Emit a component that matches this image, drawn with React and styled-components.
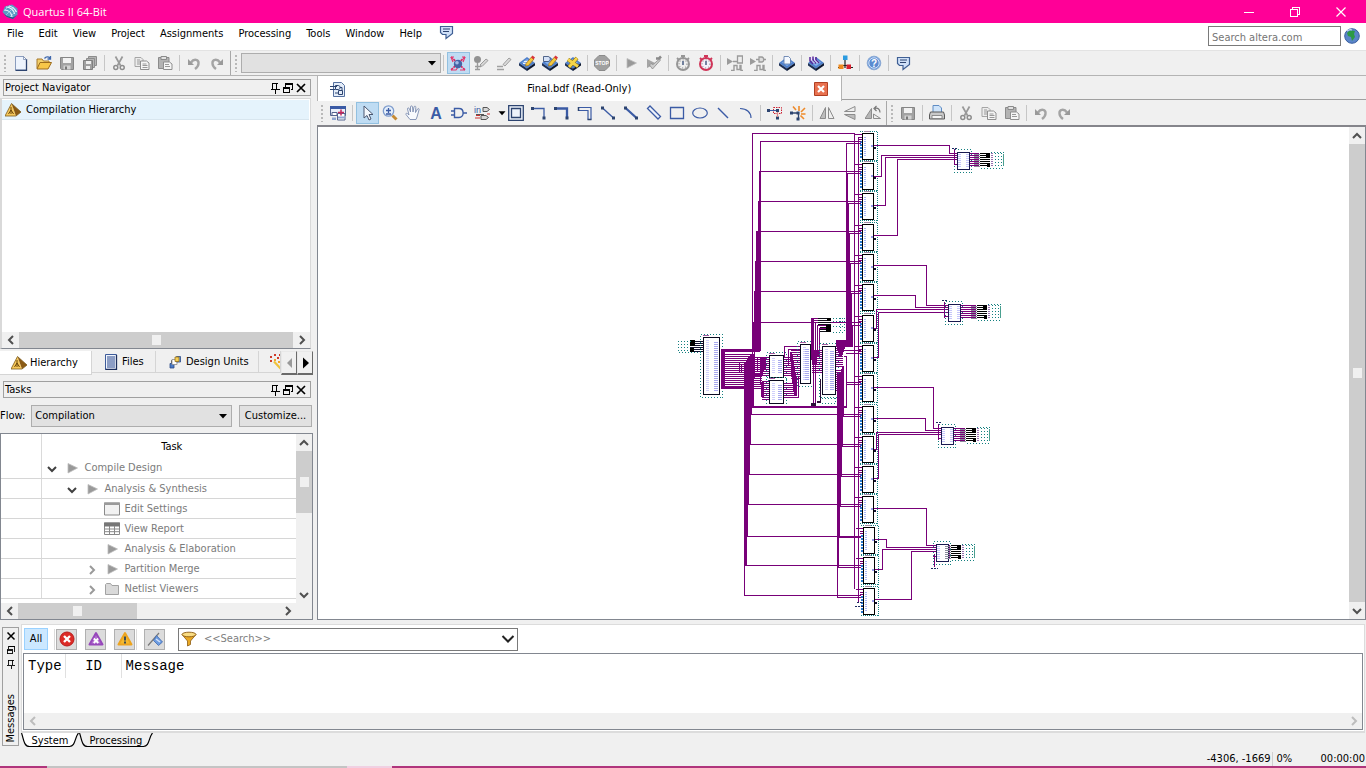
import React from "react";
import styled, { createGlobalStyle, css } from "styled-components";

const ui = '"DejaVu Sans Condensed", "Noto Sans", sans-serif';

const GlobalStyle = createGlobalStyle`
  * { box-sizing: border-box; }
  body { margin: 0; background: #f0f0f0; color: #000; font: 11px/14px ${ui}; }
  button, input, select { font: inherit; color: inherit; margin: 0; border-radius: 0; }
  h2 { font: inherit; margin: 0; }
`;

/* ---------- icons ---------- */

const blue = "#3b5ba5";
const navy = "#2d4470";
const gray = "#9b9b9b";

const chip = (
  <>
    <path d="M8 2 16 8 8 13.500 0 8z" fill="#4f80cc" />
    <path d="M0 8 8 13.500V16L0 10.500z" fill="#1c2f55" />
    <path d="M16 8 8 13.500V16l8-5.500z" fill="#0d1830" />
    <path d="M3 7.500 8 4l5 3.500-5 3.500z" fill="#86b0ea" />
  </>
);

const pencil = (
  <>
    <path d="M7 8.500 12.500 2l2.500 2-5.500 6.500L6.500 11z" fill="#f5c93d" stroke="#9a6a12" strokeWidth=".7" />
    <path d="m12 2.500 1.500-2L16 2.500 14.500 4.500z" fill="#d8333a" />
  </>
);

const bubble = (
  <>
    <path d="M2.500 2.500h12v7L8 14.500v-4H4.500l-2-2z" fill="#cfe0f8" stroke="#3f5f94" strokeWidth="1.200" />
    <path d="M5 5h7M5 7.500h6" stroke={navy} fill="none" />
  </>
);

const grayPlay = (
  <path d="m4 3.500 9.500 4.500L4 13z" fill="#999" stroke="#bdbdbd" strokeWidth=".8" />
);

const floppy = (
  <>
    <path d="M1.500 2.500h13v12h-12l-1-1z" fill="#a2a2a2" stroke="#858585" />
    <path d="M4 3h8v5H4z" fill="#f2f2f2" />
    <path d="M4.500 10.500h7v4h-7z" fill="#d2d2d2" />
    <path d="M6 11.500h2v3H6z" fill="#777" />
  </>
);

const stopwatch = (c, f) => (
  <>
    <path d="M6 1h4M8 1v2.500M2 3 4 5M14 3 12 5" stroke={c} strokeWidth="1.800" fill="none" />
    <circle cx="8" cy="9" r="6" fill={f} stroke={c} strokeWidth="2" />
    <path d="M8 6v4" stroke={navy} strokeWidth="1.300" />
    <circle cx="8" cy="9" r="4" fill="none" stroke="#777" strokeWidth="1" strokeDasharray="1 2" />
  </>
);

const wave = (
  <path d="M4 15.500h3v-5h3v4h3v-4h1v5h2" fill="none" stroke={gray} strokeWidth="1.400" />
);

const art = {
  quartus: (
    <>
      <path d="M3 2.500 10 .5l5.500 4v6L11 15l-6-2L.5 8z" fill="#5b9bc4" />
      <path d="M4 3c4 0 8 3 8.500 7M2.500 6c4 0 7 3 7.500 7M7 2c4 1 6 3 7.500 6" stroke="#e8f5fc" strokeWidth="1.200" fill="none" />
      <path d="M1 9.500 5 13l6 2 4-4-4 2.500-6-1.500z" fill="#1e5784" />
      <path d="M2 7 7 2M4 11l8-8M8 13l6-6" stroke="#bfe0f2" strokeWidth=".6" />
    </>
  ),
  bubble,
  newFile: (
    <>
      <path d="M2.500 1.500h8l3 3v10.500h-11z" fill="#eef4fd" stroke="#8a9cbd" />
      <path d="M13.500 4v11.500h-11" stroke={navy} strokeWidth="1.300" fill="none" />
      <path d="M10.500 1.500v3h3z" fill="#fff" stroke="#6c7fa6" strokeWidth=".7" />
    </>
  ),
  open: (
    <>
      <path d="M1 13.500V4h5l1.500 2H13v2" fill="#f3cf6a" stroke="#a6792a" />
      <path d="m1 14 3-6.500h11.500L12 14z" fill="#f7c648" stroke="#9c6b1c" />
      <path d="M8.500 3.500c1.500-2 4-2 5.500-.5m.5-2v3h-3" stroke="#3f68ad" strokeWidth="1.300" fill="none" />
    </>
  ),
  save: floppy,
  saveAll: (
    <>
      <path d="M6.500 1.500h8v9h-8z" fill="#b4b4b4" stroke="#8d8d8d" />
      <path d="M4.500 3.500h8v9h-8z" fill="#b4b4b4" stroke="#8d8d8d" />
      <path d="M1.500 5.500h9v9h-9z" fill="#a0a0a0" stroke="#808080" />
      <path d="M4 6h5v3H4zM4 11h4v3H4z" fill="#eee" />
    </>
  ),
  cut: (
    <>
      <path d="m4.500 1.500 5 9M11.500 1.500l-5 9" stroke="#999" strokeWidth="1.700" />
      <circle cx="4.800" cy="12.500" r="2" fill="none" stroke="#8d8d8d" strokeWidth="1.500" />
      <circle cx="11.200" cy="12.500" r="2" fill="none" stroke="#8d8d8d" strokeWidth="1.500" />
    </>
  ),
  copy: (
    <>
      <path d="M1 2.500h6l2 2v7H1z" fill="#ececec" stroke="#a5a5a5" />
      <path d="M6.500 6h6l2.500 2v6.500H6.500z" fill="#f5f5f5" stroke="#8f8f8f" />
      <path d="M3 5h3M3 7h3M3 9h3M8.500 9h4M8.500 10.500h5M8.500 12.500h5" stroke="#999" />
    </>
  ),
  paste: (
    <>
      <path d="M1.500 2.500h10.500v11h-10.500z" fill="#b3b3b3" stroke="#8b8b8b" />
      <path d="M4 1.500h5.500v3H4z" fill="#e2e2e2" stroke="#8b8b8b" />
      <path d="M6.500 7h6l2.500 2v5.500H6.500z" fill="#f5f5f5" stroke="#8f8f8f" />
      <path d="M8 9.500h4M8 11.500h5" stroke="#999" />
    </>
  ),
  undo: (
    <>
      <path d="M5 7.500C8 3 13 4.500 12.500 8.500c0 2.500-1.500 4-3.500 5.500" stroke="#a4a4a4" strokeWidth="2.400" fill="none" />
      <path d="M2 4v6h6z" fill="#9a9a9a" />
    </>
  ),
  redo: (
    <>
      <path d="M11 7.500C8 3 3 4.500 3.500 8.500c0 2.500 1.500 4 3.500 5.500" stroke="#a4a4a4" strokeWidth="2.400" fill="none" />
      <path d="M14 4v6H8z" fill="#9a9a9a" />
    </>
  ),
  project: (
    <>
      <path d="M1 2 15 15M15 2 1 15" stroke="#e0245e" strokeWidth="1.700" strokeDasharray="2.500 .8" />
      <path d="M1 2h3M1 2l2 5M15 2h-3M15 2l-2 5M1 15h5l2-3M15 15h-5" stroke="#e5386c" strokeWidth="1.200" fill="none" />
      <circle cx="8" cy="9" r="4.200" fill="#4564a5" />
      <circle cx="7" cy="7.800" r="1.800" fill="#a3bbe6" />
    </>
  ),
  assign: (
    <>
      <circle cx="4.500" cy="4.500" r="3.500" fill="#929292" />
      <path d="M4.500 8v7M2 11.500h6M2 14.500h5" stroke="#9a9a9a" strokeWidth="1.400" />
      <path d="m7 10 6-6 2 1.500-6 6z" fill="#d6d6d6" stroke="#8c8c8c" strokeWidth=".8" />
    </>
  ),
  pin: (
    <>
      <path d="M1 11.500h6M1 14.500h7" stroke="#a0a0a0" strokeWidth="1.400" />
      <path d="m7 9.500 6-6.500 2 1.500-6 6.500z" fill="#dadada" stroke="#8c8c8c" strokeWidth=".8" />
    </>
  ),
  chipEdit: (
    <>
      {chip}
      <path d="M5 6.500h5M4 8.500h5" stroke="#eaf2ff" />
      {pencil}
    </>
  ),
  chipGate: (
    <>
      {chip}
      <path d="M1.500 1.500H6c3 0 3 5 0 5H1.500z" fill="#d5e2f7" stroke={navy} strokeWidth=".8" />
      {pencil}
    </>
  ),
  chipCross: (
    <>
      {chip}
      <path d="m3 4.500 10 7M12 3 4 12" stroke="#7a5a00" strokeWidth="3.800" />
      <path d="m3 4.500 10 7M12 3 4 12" stroke="#f6d64a" strokeWidth="2.800" />
    </>
  ),
  stop: (
    <>
      <path d="M5 .5h6L15.500 5v6L11 15.500H5L.5 11V5z" fill="#a0a0a0" stroke="#8b8b8b" />
      <text x="8" y="10" textAnchor="middle" fontFamily="Liberation Sans, sans-serif" fontWeight="700" fontSize="5" fill="#fff">STOP</text>
    </>
  ),
  play: grayPlay,
  playCheck: (
    <>
      <path d="m1 4 9 4.500-9 4.500z" fill="#a5a5a5" />
      <path d="m3.500 10 3 4 8-9-1-1-6.500 5.500L5 8.500z" fill="#ccc" stroke="#8a8a8a" strokeWidth=".8" />
      <path d="M10 3.500h3l2-2" stroke="#8a8a8a" strokeWidth="2.500" fill="none" />
    </>
  ),
  timerGray: stopwatch("#969696", "#eee"),
  timerRed: stopwatch("#cf3558", "#f5f1fa"),
  simRtl: (
    <>
      {wave}
      <path d="m0 3 6 3.500L0 10z" fill={gray} />
      <path d="M10.500 1h5v7h-5zM6 6.500h4" fill="#eee" stroke={gray} strokeWidth="1.300" />
    </>
  ),
  simGate: (
    <>
      {wave}
      <path d="m0 3 6 3.500L0 10z" fill={gray} />
      <path d="M9 2h2.500c3 0 3 5 0 5H9zM6 4.500h3M14 4.500h2" fill="#ddd" stroke={gray} strokeWidth="1.300" />
    </>
  ),
  chipPage: (
    <>
      {chip}
      <path d="M5 1.500h4.500L11.500 3.500V9H5z" fill="#f5f9ff" stroke="#5673a6" strokeWidth=".8" />
    </>
  ),
  chipProg: (
    <>
      {chip}
      <path d="M2 2v4l3 3M5 1.500v4l3 3M8 2v3l3 3" stroke="#5a2a9a" strokeWidth="1.500" fill="none" />
      <path d="M3.500 2v3l3 3M6.500 2v3l3 3" stroke="#f0e6ff" fill="none" />
    </>
  ),
  netTree: (
    <>
      <path d="M6 .5h4.500v4.500H6z" fill="#2b9be0" />
      <path d="M8 5v8M3 10.500h10M1 12.500h2M13 12.500h3" stroke="#222" strokeWidth="1.200" />
      <path d="M1.500 9.500h5V14h-5z" fill="#f08a1d" />
      <path d="M9.500 9.500h4.500V14H9.500z" fill="#d8202f" />
    </>
  ),
  help: (
    <>
      <circle cx="8" cy="8" r="6.800" fill="#6e9cdb" stroke="#8ba9d3" />
      <circle cx="8" cy="8" r="5.200" fill="#5b8bd0" stroke="#dfeafa" strokeWidth=".9" />
      <text x="8" y="11.500" textAnchor="middle" fontFamily="Liberation Sans, sans-serif" fontWeight="700" fontSize="10" fill="#fff">?</text>
    </>
  ),
  globe: (
    <>
      <circle cx="8" cy="8" r="7.300" fill="#5a85c9" stroke="#3a5f9f" />
      <path d="M3 5c2-3 5-3 8-2l-1 3 1 3-3 4-1-4-3-1z" fill="#2c9a45" />
      <path d="M3 3c2-1.500 4-1.500 5-1" stroke="#c9dcf5" strokeWidth="1.200" fill="none" />
    </>
  ),
  schematic: (
    <>
      <path d="M3.500 1.500h8l3 3v11h-11z" fill="#e4edf9" stroke="#55709f" />
      <path d="M0 5.500h7M0 8.500h5M5.500 4.500h3c2 0 2 4 0 4h-3zM10 6.500h2v3M8.500 9.500h4v4h-4zM5 12h3" stroke={navy} fill="none" />
    </>
  ),
  closeDoc: (
    <>
      <path d="M1.500 1.500h13v13h-13z" fill="#e8714f" stroke="#b03f22" />
      <path d="m5 5 6 6M11 5l-6 6" stroke="#fff" strokeWidth="2.200" />
    </>
  ),
  detach: (
    <>
      <path d="M.5 1.500h15v9H.5z" fill="#e9effa" stroke="#54648f" />
      <path d="M0 1h16v3H0z" fill={blue} />
      <path d="M7.500 8.500h7.500V15H7.500zM2 7.500h5v3H2z" fill="#fff" stroke="#54648f" />
      <path d="M8 11.500h7v2H8zM2 12.500h4v2.500H2z" fill="#8fa5d0" />
      <path d="M8 7.500h6M11 4.500v6" stroke="#c3275c" strokeWidth="1.500" />
    </>
  ),
  pointer: (
    <path d="M5 1v12l3-2.500 2 4.500 2-1-2-4.500h4z" fill="#f4f8fd" stroke="#4a5670" />
  ),
  zoom: (
    <>
      <path d="m10.500 10.500 4 4" stroke="#c58a35" strokeWidth="3" />
      <circle cx="6.500" cy="6" r="5.200" fill="#e5effb" stroke="#7e9ccd" strokeWidth="1.300" />
      <path d="M4 5.500h5M6.500 3v5M4 9h5" stroke={blue} strokeWidth="1.300" />
    </>
  ),
  hand: (
    <path d="M5 14.500 1 9.500c-.5-1.500 1-1.500 2-.5l1 1-1.500-6c0-1.500 1.500-1.500 2 0L5.500 7V2c0-1.500 2-1.500 2 0l.5 5 1-5c.5-1.500 2-1 1.800.5L10.500 7.500l2-3.500c1-1 2-.3 1.500 1L12 12l-1 2.500z" fill="#f8fafd" stroke="#7d8db0" strokeWidth=".9" />
  ),
  textTool: (
    <text x="8" y="14" textAnchor="middle" fontFamily="Liberation Sans, sans-serif" fontWeight="700" fontSize="16" fill={blue}>A</text>
  ),
  gate: (
    <path d="M3.500 3.500H8c5.500 0 5.500 9 0 9H3.500zM0 6h3M0 10h3M12.500 8H16" fill="none" stroke={blue} strokeWidth="1.400" />
  ),
  pins: (
    <>
      <text x="0" y="8" fontFamily="Liberation Sans, sans-serif" fontSize="9" fill={blue}>in</text>
      <path d="M9 2.500h4l2.500 2-2.500 2H9zM7 10.500h5l2.500 2-2.500 2H7z" fill="#d7d7d7" stroke="#555" />
      <path d="M2 10.500h4M1 13h5M13 9h3" stroke="#c33" />
      <path d="M2 9.500h8" stroke="#555" />
    </>
  ),
  block: (
    <path d="M.7.7h14.600v14.600H.700zM3.500 3.500h9v9h-9z" fill="#eef3fb" stroke={navy} strokeWidth="1.300" />
  ),
  orthoNode: (
    <>
      <path d="M1 3.500h12v9" fill="none" stroke={blue} strokeWidth="1.300" />
      <path d="M0 2h3v3H0zM11.500 11.500h3v3h-3z" fill={navy} />
    </>
  ),
  orthoBus: (
    <>
      <path d="M1 3.500h12v9" fill="none" stroke={blue} strokeWidth="2.300" />
      <path d="M0 2h3v3H0zM11.500 11.500h3v3h-3z" fill={navy} />
    </>
  ),
  orthoConduit: (
    <>
      <path d="M2 2.500h12v12M2 5.500h9v9" fill="none" stroke={blue} strokeWidth="1.200" />
      <path d="M1.500 2v4M10.500 14.500h4" fill="none" stroke={navy} strokeWidth="1.500" />
    </>
  ),
  diagNode: (
    <>
      <path d="m2 2.500 11 10" stroke={blue} strokeWidth="1.400" />
      <path d="M1 1.500h3v3H1zM12 11.500h3v3h-3z" fill={navy} />
    </>
  ),
  diagBus: (
    <>
      <path d="m2 2.500 11 10" stroke={blue} strokeWidth="2.300" />
      <path d="M1 1.500h3v3H1zM12 11.500h3v3h-3z" fill={navy} />
    </>
  ),
  diagConduit: (
    <path d="M1.500 3.500 4 1l10.500 10.500L12 14z" fill="#eef3fb" stroke={blue} strokeWidth="1.300" />
  ),
  rect: <path d="M1.500 2.500h13v11h-13z" fill="none" stroke={blue} strokeWidth="1.300" />,
  oval: <ellipse cx="8" cy="8" rx="7.300" ry="5" fill="none" stroke={blue} strokeWidth="1.200" />,
  line: <path d="m3 3 10 10" stroke={blue} strokeWidth="1.400" />,
  arc: <path d="M2 3.500c7 0 11 4 11 9.500" fill="none" stroke={blue} strokeWidth="1.200" />,
  rubber: (
    <>
      <path d="M6.500 2.500h8v6h-8z" fill="none" stroke="#c23" strokeDasharray="1.500 1" />
      <path d="M1 5.500h9.500v7" fill="none" stroke={blue} />
      <path d="M0 4h3v3H0zM9 4h3v3H9zM9 11.500h3v3H9z" fill={navy} />
      <path d="M10.500 7v5" stroke="#d88" strokeWidth="1.300" />
    </>
  ),
  partial: (
    <>
      <path d="M9 6V1M11 7l4-4M11 9h4.500M10.500 10.500l3.500 3.500M6 5 3 1.500" stroke="#ee8a2a" strokeWidth="1.600" />
      <path d="M1 8h7.500v6" fill="none" stroke={navy} strokeWidth="1.300" />
      <path d="M0 6.500h3v3H0zM6.500 6.500h3v3h-3zM6.500 12.500h3v3h-3z" fill={navy} />
    </>
  ),
  flipH: (
    <>
      <path d="M6.500 2.500v11h-5.500z" fill="#bdbdbd" stroke="#8c8c8c" />
      <path d="M9.500 2.500v11h5.500z" fill="#eee" stroke="#8c8c8c" />
    </>
  ),
  flipV: (
    <>
      <path d="M13 1.500v5H2.500z" fill="#eee" stroke="#8c8c8c" />
      <path d="M13 9.500v5L2.500 9.500z" fill="#bdbdbd" stroke="#8c8c8c" />
    </>
  ),
  rotate: (
    <>
      <path d="M6.500 3.500v10H0z" fill="#b5b5b5" stroke="#8c8c8c" />
      <path d="M8.500 9v4.500h7z" fill="#eee" stroke="#8c8c8c" />
      <path d="M10 3.500c3-1 5 1 5 4M11.500 1 9 3.500 11.500 6" fill="none" stroke="#777" strokeWidth="1.200" />
    </>
  ),
  print: (
    <>
      <path d="M4 7V.5h6L12.500 3v4" fill="#cfe4fa" stroke="#5f8cc4" />
      <path d="M1.500 7h13l1 3v4H.500v-4z" fill="#c9c9c9" stroke="#5a5a5a" />
      <path d="M3 10.500h10v3H3z" fill="#f5f5f5" stroke="#777" strokeWidth=".8" />
    </>
  ),
  warnPyramid: (
    <>
      <path d="M6.500 1.500 0 14h11z" fill="#f7c95c" />
      <path d="M6.500 1.500 11 14l5-4z" fill="#8a5a14" />
      <path d="M6.500 1.500 0 14h11l5-4z" fill="none" stroke="#7c5a1c" strokeWidth=".8" />
      <path d="M6 5v3L3.500 12M6 8l2.500 4M6 8v4" stroke="#6b4608" fill="none" />
    </>
  ),
  files: (
    <>
      <path d="M2.500.5h11v15h-11z" fill="#f0f5fd" stroke="#3d5b9a" />
      <path d="M4 3h8M4 5h8M4 7h8M4 9h8M4 11h8M4 13h8" stroke="#28468c" />
      <path d="M13.500 1v14.500h-11" stroke="#1d2f5c" strokeWidth="1.300" fill="none" />
    </>
  ),
  units: (
    <>
      <path d="M4.500 11V6.500H9" stroke="#555" fill="none" />
      <path d="M3 9.500h4V14H3z" fill="#4a7ac7" stroke="#2b4a85" strokeWidth=".8" />
      <path d="M5 5.500h5v5H5z" fill="#fff" stroke="#8a8a8a" strokeWidth=".8" />
      <path d="M9.500 2.500h4V8h-4z" fill="#6ea0e0" stroke="#2b4a85" strokeWidth=".8" />
      <path d="M8 3h4v4.500H8z" fill="#f6cf55" stroke="#94701c" strokeWidth=".8" />
    </>
  ),
  wand: (
    <>
      <path d="M5 7.500 12 15" stroke="#f0c23c" strokeWidth="2.200" />
      <path d="M1 2h2v2H1zM5 0h2v2H5zM8 3h2v2H8zM1 6h2v2H1zM10 0h2v2h-2z" fill="#cf3b2a" />
      <path d="M5 5h2v2H5zM9 7h2v2H9z" fill="#f2a52b" />
    </>
  ),
  settings: (
    <>
      <path d="M.5 2h15v12H.5z" fill="#f2f2f2" stroke="#8a8a8a" />
      <path d="M0 1.500h16V4H0z" fill="#9a9a9a" />
    </>
  ),
  report: (
    <>
      <path d="M.5 2h15v11.500H.5z" fill="#fff" stroke="#888" />
      <path d="M0 1.500h16v4H0z" fill="#777" />
      <path d="M0 8h16M0 10.700h16M5.500 5v8.500M10.500 5v8.500" stroke="#888" />
    </>
  ),
  folder: (
    <path d="M1.500 13.500v-10l1-1h4l1.500 2h6.500v9z" fill="#d9d9d9" stroke="#a2a2a2" />
  ),
  error: (
    <>
      <circle cx="8" cy="8" r="7" fill="#dd2b26" stroke="#b81b1b" />
      <path d="m5 5 6 6M11 5l-6 6" stroke="#fff" strokeWidth="2.400" />
    </>
  ),
  critical: (
    <>
      <path d="M8 2 14.500 13.500h-13z" fill="#b26fd0" stroke="#9748bb" strokeWidth="2" strokeLinejoin="round" />
      <path d="m5.800 7.500 4.500 4.500M10.200 7.500 5.700 12" stroke="#fff" strokeWidth="1.800" />
    </>
  ),
  warning: (
    <>
      <path d="M8 2 14.500 13.500h-13z" fill="#f4b92f" stroke="#eda41f" strokeWidth="2" strokeLinejoin="round" />
      <path d="M8 5.500v4M8 10.500v2" stroke="#3b4c57" strokeWidth="2" />
    </>
  ),
  flag: (
    <>
      <path d="M1 14.500 12 2" stroke="#777" strokeWidth="1.200" />
      <path d="M9.500 4.500 15.500 11l-4 3.500L6.500 9.500z" fill="#6c9be0" stroke="#3f68ad" strokeWidth=".8" />
      <path d="m9 8 4 3" stroke="#d3e3fb" strokeWidth="1.500" />
    </>
  ),
  funnel: (
    <>
      <path d="M1 3.500 6.500 10v5l3-1.500V10L15 3.500z" fill="#e9a823" stroke="#8c5a12" strokeWidth=".8" />
      <ellipse cx="8" cy="3.500" rx="7" ry="2.300" fill="#f9dc82" stroke="#8c5a12" strokeWidth=".9" />
    </>
  ),
  dockPin: (
    <path d="M5 3.500h6M5.500 3v6M9.500 3v6M3.500 9.500h9M8 10v4" stroke="#000" fill="none" shapeRendering="crispEdges" />
  ),
  dockFloat: (
    <path d="M5.500 7V4.500h7v5H11M5 3.500h8M3.500 8.500h6v4h-6zM3 7.500h7" stroke="#000" fill="none" shapeRendering="crispEdges" />
  ),
  dockClose: (
    <path d="m4 4 8 8M12 4l-8 8" stroke="#000" strokeWidth="1.700" />
  ),
  minimize: <path d="M3 8.500h10" stroke="#fff" fill="none" shapeRendering="crispEdges" />,
  restore: <path d="M3.500 5.500h7v7h-7zM5.500 5V3.500h7v7H11" stroke="#fff" fill="none" shapeRendering="crispEdges" />,
  closeWin: <path d="m3.500 3.500 9 9M12.500 3.500l-9 9" stroke="#fff" strokeWidth="1.200" />,
  left: <path d="M10 4 6 8l4 4" fill="none" stroke="currentColor" strokeWidth="2" />,
  right: <path d="m6 4 4 4-4 4" fill="none" stroke="currentColor" strokeWidth="2" />,
  up: <path d="m4 10 4-4 4 4" fill="none" stroke="currentColor" strokeWidth="2" />,
  down: <path d="m4 6 4 4 4-4" fill="none" stroke="currentColor" strokeWidth="2" />,
  chevron: <path d="m2.500 5 5.500 5.500L13.500 5" fill="none" stroke="#222" strokeWidth="2" />,
  tabLeft: <path d="M10 3v10L5 8z" fill="#9a9a9a" />,
  tabRight: <path d="M5 2.500v11L11 8z" fill="#000" />,
  caret: <path d="M4 6h8l-4 4.500z" fill="#000" />,
};

const Svg = styled.svg`
  display: block;
  flex: none;
`;

const Icon = ({ name, size = 16 }) => (
  <Svg width={size} height={size} viewBox="0 0 16 16" aria-hidden="true">
    {art[name]}
  </Svg>
);

/* ---------- shell ---------- */

const Shell = styled.div`
  min-height: 100vh;
  display: flex;
  flex-direction: column;
`;

const TitleBar = styled.header`
  height: 23px;
  display: flex;
  align-items: center;
  padding: 0 2px;
  background: #ff0097;
  color: #fff;
  font: 11px/16px "Open Sans", sans-serif;
`;

const Title = styled.span`
  flex: 1;
  margin-left: 5px;
`;

const WindowButton = styled.button`
  width: 46px;
  height: 20px;
  padding: 0;
  border: 0;
  background: none;
  display: grid;
  place-items: center;
`;

const MenuBar = styled.nav`
  height: 28px;
  display: flex;
  align-items: flex-start;
  gap: 1px;
  background: #fff;
  border-bottom: 1px solid #e3e3e3;
`;

const MenuItem = styled.button`
  padding: 4px 7px;
  border: 0;
  background: none;
`;

const MenuIcon = styled(MenuItem)`
  padding: 1px 8px;
`;

const SiteSearch = styled.form`
  margin-left: auto;
  display: flex;
  align-items: center;
  gap: 3px;
  padding: 3px 6px 0 0;
`;

const SiteInput = styled.input`
  width: 133px;
  height: 20px;
  padding: 2px 3px 0;
  border: 1px solid #7a7a7a;
  background: #fff;
  &::placeholder { color: #757575; opacity: 1; }
`;

const PlainButton = styled.button`
  padding: 0;
  border: 0;
  background: none;
  display: grid;
  place-items: center;
`;

const ToolRow = styled.div`
  height: ${(p) => (p.$inner ? "26px" : "25px")};
  display: flex;
  align-items: stretch;
  background: #f0f0f0;
  border-bottom: ${(p) => (p.$inner ? "2px solid #85858b" : "1px solid #b4b4b4")};
`;

const Tools = styled.div`
  display: flex;
  align-items: center;
  padding-right: 1px;
  border-right: ${(p) => (p.$last ? "0" : "1px solid #a8a8a8")};
`;

const Grip = styled.span`
  width: 10px;
  height: 18px;
  background: radial-gradient(circle, #b9b9b9 1px, transparent 1px) 0 0 / 10px 4px;
`;

const Separator = styled.span`
  width: 1px;
  height: 16px;
  margin: 0 3px 0 2px;
  background: #c6c6c6;
`;

const ToolButton = styled.button`
  width: 23px;
  height: 22px;
  padding: 0 1px 0 0;
  display: grid;
  place-items: center;
  border: 1px solid ${(p) => (p.$active ? "#92c0e0" : "transparent")};
  background: ${(p) => (p.$active ? "#bfdcf3" : "none")};
`;

const DropButton = styled(ToolButton)`
  width: 11px;
`;

const SelectWrap = styled.span`
  position: relative;
  display: flex;
  width: ${(p) => p.$width};
  svg { position: absolute; right: 1px; top: 50%; margin-top: -8px; pointer-events: none; }
`;

const Select = styled.select`
  appearance: none;
  width: 100%;
  height: ${(p) => p.$height};
  padding: 0 3px;
  border: 1px solid #adadad;
  background: #e1e1e1;
`;

const Work = styled.main`
  flex: 1;
  display: flex;
  min-height: 0;
`;

/* ---------- left docks ---------- */

const Side = styled.aside`
  flex: none;
  width: 313px;
  margin-right: 4px;
  display: flex;
  flex-direction: column;
`;

const DockHeader = styled.header`
  height: 17px;
  margin: ${(p) => p.$margin};
  padding: 0 4px 0 1px;
  display: flex;
  align-items: center;
  border: 1px solid #a0a0a0;
  h2 { flex: 1; padding-top: 1px; }
`;

const DockButton = styled(PlainButton)`
  width: 13px;
  height: 15px;
`;

const TreeBox = styled.div`
  flex: 1;
  margin: 2px 2px 0 0;
  border: 1px solid #d9d9d9;
  border-width: 1px 1px 1px 2px;
  border-bottom-color: #828790;
  background: #fff;
  display: flex;
  flex-direction: column;
`;

const TreeItem = styled.div`
  flex: 1;
  div {
    display: flex;
    align-items: center;
    gap: 5px;
    height: 20px;
    margin: 1px 1px 0 0;
    padding-left: 3px;
    background: #e5f3fc;
    border-bottom: 1px solid #d8e6ef;
  }
`;

const arrowBox = css`
  flex: 0 0 17px;
  display: grid;
  place-items: center;
  padding: 0;
  border: 0;
  background: #f0f0f0;
`;

const ScrollTrack = styled.div`
  display: flex;
  flex: none;
  flex-direction: ${(p) => (p.$vertical ? "column" : "row")};
  ${(p) => (p.$vertical ? "width: 16px;" : "height: 16px;")}
  background: #f0f0f0;
  color: ${(p) => (p.$idle ? "#bdbdbd" : "#505050")};
`;

const ScrollArrow = styled.button`
  ${arrowBox}
`;

const Thumb = styled.div`
  flex: ${(p) => p.$grow} 1 0;
  background: ${(p) => (p.$idle ? "none" : "#cdcdcd")};
  display: grid;
  place-items: center;
  &::after {
    content: "";
    width: ${(p) => (p.$idle ? "0" : "9px")};
    height: ${(p) => (p.$idle ? "0" : "10px")};
    background: #f0f0f0;
  }
`;

const Rest = styled.div`
  flex: ${(p) => p.$grow} 1 0;
`;

const Corner = styled.div`
  flex: 0 0 16px;
`;

const ScrollBar = ({ vertical, idle, corner, thumb = 1, rest = 0 }) => (
  <ScrollTrack $vertical={vertical} $idle={idle}>
    <ScrollArrow aria-label={vertical ? "Scroll up" : "Scroll left"}>
      <Icon name={vertical ? "up" : "left"} />
    </ScrollArrow>
    <Thumb $grow={thumb} $idle={idle} />
    {rest > 0 && <Rest $grow={rest} />}
    <ScrollArrow aria-label={vertical ? "Scroll down" : "Scroll right"}>
      <Icon name={vertical ? "down" : "right"} />
    </ScrollArrow>
    {corner && <Corner />}
  </ScrollTrack>
);

const TabStrip = styled.div`
  height: 24px;
  margin-top: 2px;
  display: flex;
  align-items: flex-start;
`;

const SideTab = styled.button`
  flex: ${(p) => (p.$cut ? "1" : "none")};
  width: ${(p) => p.$width};
  height: ${(p) => (p.$active ? "24px" : "22px")};
  padding: 0 0 0 ${(p) => (p.$cut ? "10px" : "11px")};
  display: flex;
  align-items: center;
  gap: 3px;
  overflow: hidden;
  border: 0;
  border-right: 1px solid #d5d5d5;
  border-bottom: 1px solid #d5d5d5;
  background: ${(p) => (p.$active ? "#fff" : "#f0f0f0")};
`;

const TabScroll = styled.button`
  width: 16px;
  height: 24px;
  padding: 0;
  display: grid;
  place-items: center;
  border: 1px solid #e8e8e8;
  border-right-color: #6a6a6a;
  border-bottom: 2px solid #6a6a6a;
  background: #f0f0f0;
`;

const FlowRow = styled.div`
  display: flex;
  align-items: center;
  gap: 7px;
  padding: 7px 1px 6px 0;
  label { flex: 1; display: flex; align-items: center; gap: 6px; }
`;

const Button = styled.button`
  width: 73px;
  height: 22px;
  padding: 0;
  border: 1px solid #adadad;
  background: #e1e1e1;
`;

const TaskBox = styled.div`
  flex: 0 0 187px;
  display: flex;
  flex-direction: column;
  border: 1px solid #828790;
  background: #fff;
  overflow: hidden;
`;

const TaskBody = styled.div`
  flex: 1;
  min-height: 0;
  display: flex;
`;

const TaskScroller = styled.div`
  flex: 1;
  overflow: hidden;
`;

const TaskTable = styled.table`
  width: 100%;
  border-collapse: collapse;
  color: #7b7b7b;
  th { height: 24px; padding: 1px 0 0 6px; font-weight: normal; color: #000; }
  th:first-child, td:first-child { width: 40px; border-right: 1px solid #dadada; }
  td { height: 20px; padding: 0; border-bottom: 1px solid #d6d6d6; }
`;

const TaskCell = styled.div`
  display: flex;
  align-items: center;
  height: 19px;
  padding: 1px 0 0 ${(p) => p.$level * 20 + 2}px;
  color: #7b7b7b;
  > :nth-child(2) { margin: 0 5px 0 6px; }
`;

const Toggle = styled(PlainButton)`
  width: 14px;
  height: 14px;
  color: ${(p) => (p.$open ? "#404040" : "#9a9a9a")};
`;

/* ---------- document area ---------- */

const Doc = styled.section`
  flex: 1;
  min-width: 0;
  display: flex;
  flex-direction: column;
`;

const DocTabs = styled.div`
  height: 25px;
  display: flex;
  &::after { content: ""; flex: 1; margin-bottom: 1px; border-bottom: 1px solid #a0a0a0; }
`;

const DocTab = styled.div`
  flex: 0 0 50%;
  max-width: 525px;
  display: flex;
  align-items: center;
  padding: 0 12px;
  background: #fff;
  border-right: 1px solid #b4b4b4;
  border-left: 1px solid #b4b4b4;
  span { flex: 1; text-align: center; }
`;

const Viewport = styled.div`
  flex: 1;
  display: flex;
  min-height: 0;
  border: solid #828790;
  border-width: 0 1px 1px 1px;
  background: #fff;
`;

const Canvas = styled.div`
  flex: 1;
  min-width: 0;
  overflow: hidden;
`;

/* ---------- schematic ---------- */

const wire = "#780078";
const dots = "#148080";

const row = (y, x, to = 861) => `M${x} ${y}H${to}`;

const blockTops = [133, 163, 193, 224, 254, 284, 315, 345, 375, 406, 436, 466, 496, 527, 557, 588];

const Mux = ({ x, y }) => (
  <g>
    <path d={`M${x - 2} ${y - 1.5}h17M${x - 2} ${y + 27.5}h18M${x + 15.5} ${y - 1}v29`} stroke={dots} strokeDasharray="1 1" />
    <path d={`M${x + 2} ${y - 1.5}h6`} stroke="#a58aa5" />
    <path d={`M${x - 1} ${y + 8}v18`} stroke="#2a7ad0" strokeWidth="2" strokeDasharray="2 1" />
    <path d={`M${x + 9} ${y + 12.5}h3`} stroke="#9a9af0" strokeWidth="2" />
    <rect x={x + 0.5} y={y + 0.5} width="11" height="26" stroke="#000" />
    <path d={`M${x + 2.5} ${y + 4}v20`} stroke="#a8b8f8" strokeWidth="2" strokeDasharray="1 1" />
    <path d={`M${x - 7} ${y + 1.5}h7M${x - 3} ${y + 4.5}h3M${x - 3} ${y + 6.5}h3`} stroke={wire} />
    <path d={`M${x + 12} ${y + 14.5}h2`} stroke="#101030" strokeWidth="2" />
  </g>
);

const Decoder = ({ x, y, end, dotEnd }) => (
  <g>
    <rect x={x - 2.5} y={y - 2.5} width="17" height="23" stroke={dots} strokeDasharray="1 2" />
    <path d={`M${x + 2.5} ${y + 2}v14M${x + 10} ${y + 2}v14`} stroke="#c5c5fa" strokeWidth="3" strokeDasharray="1 1" />
    <rect x={x + 0.5} y={y + 0.5} width="12" height="17" fill="none" stroke="#1a1a50" />
    {[1, 3, 5, 7, 9, 11, 13].map((d) => (
      <path key={d} d={`M${x + 13} ${y + d + 0.5}H${end - 12}`} stroke={wire} />
    ))}
    <path d={`M${end - 14} ${y + 2}v13`} stroke="#8a8a9a" strokeWidth="6" strokeDasharray="1 1" />
    {[1, 3, 5, 7, 9, 11, 13].map((d) => (
      <path key={d} d={`M${end - 11} ${y + d + 0.5}h10`} stroke="#000" />
    ))}
    <path d={`M${end - 5} ${y + 1}h4v5h-4zM${end - 4} ${y + 12}h3v3h-3z`} fill="#000" />
    <path d={`M${end + 0.5} ${y + 1}v14`} stroke="#9a70b0" strokeWidth="2" strokeDasharray="1 1" />
    {[4, 7, 10].map((d) => (
      <path key={d} d={`M${end + d + 0.5} ${y + 1}v15`} stroke={dots} strokeDasharray="1 2" />
    ))}
    <path d={`M${end} ${y + 0.5}H${dotEnd}M${end - 10} ${y + 16.5}H${dotEnd}`} stroke={dots} strokeDasharray="1 2" />
    <path d={`M${dotEnd - 0.5} ${y + 2}v12`} stroke="#4aa090" />
  </g>
);

const Chip = ({ x, y, w, h }) => (
  <g>
    <rect x={x - 2.5} y={y - 2.5} width={w + 5} height={h + 5} stroke={dots} strokeDasharray="1 2" />
    <rect x={x + 0.5} y={y + 0.5} width={w - 1} height={h - 1} fill="#fff" stroke="#0a0a20" />
    <path d={`M${x + 4} ${y + 3}V${y + h - 4}`} stroke="#d0d0fb" strokeWidth="3" strokeDasharray="1 1" />
    <path d={`M${x + w - 4} ${y + 5}V${y + h - 4}`} stroke="#a8a8ee" strokeWidth="4" strokeDasharray="1 1" />
    <path d={`M${x} ${y - 1.5}h6`} stroke="#a05aa0" />
  </g>
);

const comb = (x1, x2, y1, y2, step = 2) => {
  let d = "";
  for (let y = y1; y <= y2; y += step) d += `M${x1} ${y + 0.5}H${x2}`;
  return d;
};

const upperLeft = [[760, 141.5], [759, 171.5], [758, 201.5], [756, 231.5], [755, 261.5], [754, 291.5], [752, 322.5]];
const upperRight = [[846, 143.5], [847, 173.5], [848, 203.5], [849, 233.5], [850, 263.5], [851, 293.5], [852, 325.5]];
const lowerLeft = [[751, 414.5], [750, 444.5], [749, 474.5], [748, 504.5], [747, 536.5], [746, 565.5], [744, 595.5]];
const lowerRight = [[843, 416.5], [842, 446.5], [841, 476.5], [840, 506.5], [839, 537.5], [838, 567.5], [837, 597.5]];

const outputs = [
  "M874 145.500H949.500V153.500H957",
  "M874 176.500H881.500V155.500H957",
  "M874 205.500H885.500V157.500H957",
  "M874 235.500H897.500V159.500H957",
  "M874 265.500H926.500V305.500H948",
  "M874 295.500H915.500V307.500H948",
  "M874 328.500H876.500V309.500H948",
  "M874 357.500H878.500V312.500H948",
  "M874 387.500H933.500V428.500H941",
  "M874 418.500H925.500V430.500H941",
  "M874 449.500H876.500V432.500H941",
  "M874 478.500H878.500V434.500H941",
  "M874 508.500H926.500V545.500H936",
  "M875 539.500H886.500V547.500H936",
  "M875 569.500H882.500V549.500H936",
  "M875 599.500H911.500V551.500H936",
];

const Schematic = () => (
  <Svg width="100%" height="100%" role="img" aria-label="Final.bdf block diagram">
    <g transform="translate(-318 -127)" fill="none" strokeWidth="1" shapeRendering="crispEdges">
      {blockTops.map((y, i) => (
        <Mux key={y} x={i > 12 ? 863 : 862} y={y} />
      ))}
      <path d={outputs.join("")} stroke={wire} />
      <path d="M752.500 349V133.500H854.500V589M858.500 137V603" stroke={wire} />
      {[...upperLeft, ...upperRight, ...lowerLeft, ...lowerRight].map(([x, y]) => (
        <path key={y} d={row(y, x)} stroke={wire} />
      ))}
      {upperLeft.map(([x, y]) => (
        <path key={y} d={`M${x} ${y}h${x === 760 ? 1 : 2}V351h-2z`} fill={wire} />
      ))}
      {upperRight.map(([x, y]) => (
        <path key={y} d={`M${x} ${y}h1V347h-1z`} fill={wire} />
      ))}
      {lowerLeft.map(([x, y]) => (
        <path key={y} d={`M744 362H${x + 1}V${y}H744z`} fill={wire} />
      ))}
      {lowerRight.map(([x, y]) => (
        <path key={y} d={`M837 372H${x + 1}V${y}H837z`} fill={wire} />
      ))}

      {/* input decoder and its fan-out */}
      <path d={comb(690, 703, 341, 351)} stroke="#101030" />
      <path d="M690 340h5v6h-5zM690 348h4v4h-4z" fill="#000" />
      <path d="M678.500 341v12M681.500 341v12M684.500 341v12M687.500 341v12" stroke={dots} strokeDasharray="1 2" />
      <path d="M679 352.500H702M678 341.500h14" stroke={dots} strokeDasharray="1 2" />
      <Chip x={703} y={337} w={17} h={58} />
      <path d="M721 349h39v3h-35v37h-4z" fill={wire} />
      <path d={comb(725, 754, 354, 372) + comb(725, 762, 374, 388)} stroke={wire} />
      <path d="M744 364 750 355h4v53h-10z" fill={wire} />
      <path d="M725 386h22v2h-22z" fill={wire} />
      <path d="M739.500 363V372M741.500 365V372M754.500 352V378M757.500 357V371M760.500 358V384M763.500 359V372" stroke={wire} />
      <path d={comb(753, 769, 357, 375) + comb(762, 769, 381, 399)} stroke={wire} />
      <path d="M760 358h6v12h-3v6h-3zM761 382h3v15h-3z" fill={wire} />

      <Chip x={769} y={355} w={15} h={23} />
      <Chip x={769} y={380} w={15} h={24} />
      <path d={comb(784, 793, 357, 375) + comb(784, 797, 383, 397)} stroke={wire} />
      <path d="M784.500 357V346.500H800M788.500 366V349.500H800M798.500 397V376M784 397.500H798.500" stroke={wire} />
      <path d="M790 352h2l5 28v15h-3l-3-24z" fill={wire} />
      <path d={comb(791, 800, 350, 378)} stroke={wire} />

      <Chip x={800} y={344} w={11} h={40} />
      <path d="M811 318h3v87h-1v-45h-2z" fill={wire} />
      <path d="M815.500 404V322.500H824M817.500 354V325.500H826M819.500 350V328.500H826M811 318.500h14M811 320.500h14" stroke={wire} />
      <path d="M812 350h8v6h-3v8h-5z" fill={wire} />
      <path d={comb(812, 822, 350, 372)} stroke={wire} />
      <path d={comb(818, 831, 318, 324) + comb(820, 831, 327, 331)} stroke="#101018" />
      <path d="M827 318h4v3h-4zM826 325h5v7h-5z" fill="#000" />
      <path d="M833 318.500h12M833 321.500h12M833 326.500h12M833 332.500h12M844.500 318v14M840.500 318v14" stroke={dots} strokeDasharray="1 2" />

      <Chip x={822} y={346} w={14} h={49} />
      <path d="M811 403h6v-2h3v-22h1v24h-5v3h-5z" fill="#2a1038" />
      <path d="M822 398.500h14M822 403.500h14M835.500 398v6" stroke={dots} strokeDasharray="1 2" />
      <path d="M836 340h11v-6h6v13h-8l-3 10h-2l-4-11z" fill={wire} />
      <path d={comb(836, 843, 348, 366)} stroke={wire} />
      <path d={comb(836, 844, 370, 390)} stroke={wire} />
      <path d="M837 380 843 366h1v42h-7z" fill={wire} />
      <path d="M844 356.500H846.500V406M843 350.500H861M846 353.500H861M847 382.500H861M847 384.500H861" stroke={wire} />
      <path d="M751 406h96v2h-96z" fill={wire} />
      <path d="M752.500 352V407" stroke={wire} />

      {/* segment decoders */}
      <Decoder x={957} y={152} end={991} dotEnd={1004} />
      <Decoder x={948} y={304} end={988} dotEnd={1001} />
      <Decoder x={941} y={427} end={977} dotEnd={990} />
      <Decoder x={936} y={544} end={962} dotEnd={975} />
      <path d="M954.500 149v15M957 164.500h-3M944.500 302v16M948 316.500h-3M938.500 424v16M941 438.500h-3M934.500 567V554M936 556.500h-3" stroke={wire} />
      <path d="M952 148.500h5M942 300.500h5M936 422.500h5M931 568.500h7M857 602.500h5M855 606.500h8" stroke="#1a2a60" strokeDasharray="2 1" />
    </g>
  </Svg>
);

/* ---------- messages ---------- */

const Messages = styled.section`
  display: flex;
  align-items: flex-start;
  gap: 2px;
  padding: 4px 1px 0 2px;
`;

const MessageHandle = styled.header`
  width: 17px;
  height: 119px;
  margin-top: 3px;
  padding: 1px 0 2px;
  display: flex;
  flex-direction: column;
  align-items: center;
  border: 1px solid #a0a0a0;
  h2 { margin-top: auto; writing-mode: vertical-rl; transform: rotate(180deg); }
`;

const MessageMain = styled.div`
  flex: 1;
  min-width: 0;
`;

const MessagePanel = styled.div`
  border: 1px solid #dcdcdc;
  border-bottom-width: 2px;
  background: #fff;
  padding: 3px 1px 1px;
`;

const FilterRow = styled.div`
  display: flex;
  align-items: center;
  height: 22px;
  gap: 6px;
  padding-left: 1px;
`;

const FilterGroup = styled.div`
  display: flex;
  gap: 8px;
  margin-right: 1px;
  border: 1px solid #dcdcdc;
  border-width: 0 1px;
  padding: 0 1px;
`;

const FilterButton = styled.button`
  width: ${(p) => (p.$active ? "24px" : "21px")};
  height: ${(p) => (p.$active ? "22px" : "21px")};
  padding: 0;
  display: grid;
  place-items: center;
  border: 1px solid ${(p) => (p.$active ? "#99d1ff" : "#b0b0b0")};
  background: ${(p) => (p.$active ? "#cce8ff" : "#dcdcdc")};
`;

const SearchBox = styled.label`
  width: 340px;
  height: 23px;
  margin-left: 7px;
  padding: 0 1px 0 2px;
  display: flex;
  align-items: center;
  gap: 4px;
  border: 1px solid #7a7a7a;
  input { flex: 1; min-width: 0; border: 0; padding: 0 3px; background: none; outline: 0; }
  input::placeholder { color: #808080; opacity: 1; }
`;

const MessageBox = styled.div`
  height: 77px;
  margin-top: 3px;
  display: flex;
  flex-direction: column;
  border: 1px solid #828790;
`;

const MessageTable = styled.table`
  align-self: flex-start;
  border-collapse: collapse;
  margin-bottom: auto;
  font: 14px/18px "Liberation Mono", monospace;
  th { height: 24px; padding: 0 3px 0 4px; font-weight: normal; text-align: left; border-right: 1px solid #e0e0e0; }
  th:nth-child(2) { width: 56px; text-align: center; }
  th:last-child { border: 0; }
`;

const MessageTabs = styled.div`
  display: flex;
`;

const MessageTab = styled.button`
  position: relative;
  width: ${(p) => p.$width};
  height: 15px;
  padding: 0;
  border: 0;
  background: none;
  span { position: relative; }
  svg { position: absolute; left: 0; top: 0; }
`;

const TabShape = ({ active, width }) => (
  <svg width={width} height="15" aria-hidden="true">
    <path d={`M.500 0c2 5 2 13.500 8 13.500h${width - 18}c6 0 5-8.500 9-13.500`} fill={active ? "#fff" : "#f0f0f0"} stroke="#000" strokeWidth="1.200" />
  </svg>
);

const StatusBar = styled.footer`
  height: 20px;
  display: flex;
  justify-content: flex-end;
  align-items: center;
  padding: 2px 1px 0 0;
  background: linear-gradient(90deg, #b0357c 47px, #c4c4c4 47px 347px, #f0d0e2 347px 392px, #b0357c 392px) bottom / 100% 2px no-repeat;
`;

const Progress = styled.span`
  width: 49px;
  margin-left: 1px;
  padding-left: 4px;
  border-left: 1px solid #d0d0d0;
`;

/* ---------- composition ---------- */

const ToolList = ({ list }) =>
  list.map((n, i) => {
    if (n === "|") return <Separator key={i} />;
    if (n === "v")
      return (
        <DropButton key={i} aria-label="More pin tools">
          <Icon name="caret" size={14} />
        </DropButton>
      );
    const active = n.startsWith("*");
    const name = active ? n.slice(1) : n;
    return (
      <ToolButton key={i} $active={active} aria-label={name}>
        <Icon name={name} />
      </ToolButton>
    );
  });

const DockButtons = () => (
  <>
    <DockButton aria-label="Auto hide"><Icon name="dockPin" /></DockButton>
    <DockButton aria-label="Float"><Icon name="dockFloat" /></DockButton>
    <DockButton aria-label="Close"><Icon name="dockClose" /></DockButton>
  </>
);

const tasks = [
  [0, "open", "play", "Compile Design"],
  [1, "open", "play", "Analysis & Synthesis"],
  [2, null, "settings", "Edit Settings"],
  [2, null, "report", "View Report"],
  [2, null, "play", "Analysis & Elaboration"],
  [2, "closed", "play", "Partition Merge"],
  [2, "closed", "folder", "Netlist Viewers"],
];

const menus = ["File", "Edit", "View", "Project", "Assignments", "Processing", "Tools", "Window", "Help"];

export default function App() {
  return (
    <Shell>
      <GlobalStyle />
      <TitleBar>
        <Icon name="quartus" />
        <Title>Quartus II 64-Bit</Title>
        <WindowButton aria-label="Minimize"><Icon name="minimize" /></WindowButton>
        <WindowButton aria-label="Restore"><Icon name="restore" /></WindowButton>
        <WindowButton aria-label="Close"><Icon name="closeWin" /></WindowButton>
      </TitleBar>
      <MenuBar>
        {menus.map((m) => (
          <MenuItem key={m}>{m}</MenuItem>
        ))}
        <MenuIcon aria-label="Feedback"><Icon name="bubble" /></MenuIcon>
        <SiteSearch>
          <SiteInput aria-label="Search altera.com" placeholder="Search altera.com" />
          <PlainButton type="button" aria-label="Open site"><Icon name="globe" /></PlainButton>
        </SiteSearch>
      </MenuBar>
      <ToolRow>
        <Tools>
          <Grip />
          <ToolList list={["newFile", "open", "save", "saveAll", "|", "cut", "copy", "paste", "|", "undo", "redo"]} />
        </Tools>
        <Tools $last>
          <Grip />
          <SelectWrap $width="200px">
            <Select $height="20px" aria-label="Revision"><option></option></Select>
            <Icon name="caret" />
          </SelectWrap>
          <ToolList
            list={[
              "|", "*project", "assign", "pin", "chipEdit", "chipGate", "chipCross", "|", "stop", "|", "play", "playCheck",
              "|", "timerGray", "timerRed", "|", "simRtl", "simGate", "|", "chipPage", "|", "chipProg", "|", "netTree",
              "|", "help", "|", "bubble",
            ]}
          />
        </Tools>
      </ToolRow>

      <Work>
        <Side>
          <DockHeader $margin="3px 2px 0 3px">
            <h2>Project Navigator</h2>
            <DockButtons />
          </DockHeader>
          <TreeBox>
            <TreeItem>
              <div><Icon name="warnPyramid" />Compilation Hierarchy</div>
            </TreeItem>
            <ScrollBar />
          </TreeBox>
          <TabStrip>
            <SideTab $active $width="92px"><Icon name="warnPyramid" />Hierarchy</SideTab>
            <SideTab $width="64px"><Icon name="files" />Files</SideTab>
            <SideTab $width="103px"><Icon name="units" />Design Units</SideTab>
            <SideTab $cut aria-label="IP Components"><Icon name="wand" /></SideTab>
            <TabScroll aria-label="Previous tabs"><Icon name="tabLeft" /></TabScroll>
            <TabScroll aria-label="Next tabs"><Icon name="tabRight" /></TabScroll>
          </TabStrip>
          <DockHeader $margin="6px 2px 0 3px">
            <h2>Tasks</h2>
            <DockButtons />
          </DockHeader>
          <FlowRow>
            <label>
              Flow:
              <SelectWrap $width="100%">
                <Select $height="22px"><option>Compilation</option></Select>
                <Icon name="caret" />
              </SelectWrap>
            </label>
            <Button>Customize...</Button>
          </FlowRow>
          <TaskBox>
            <TaskBody>
              <TaskScroller>
                <TaskTable>
                  <thead>
                    <tr><th aria-label="Status" /><th>Task</th></tr>
                  </thead>
                  <tbody>
                    {tasks.map(([level, state, icon, label]) => (
                      <tr key={label}>
                        <td />
                        <td>
                          <TaskCell $level={level}>
                            <Toggle $open={state === "open"} aria-label={`Expand ${label}`} disabled={!state}>
                              {state && <Icon name={state === "open" ? "down" : "right"} />}
                            </Toggle>
                            <Icon name={icon} />
                            {label}
                          </TaskCell>
                        </td>
                      </tr>
                    ))}
                  </tbody>
                </TaskTable>
              </TaskScroller>
              <ScrollBar vertical thumb={62} rest={73} />
            </TaskBody>
            <ScrollBar corner thumb={119} rest={142} />
          </TaskBox>
        </Side>

        <Doc>
          <DocTabs>
            <DocTab>
              <Icon name="schematic" />
              <span>Final.bdf (Read-Only)</span>
              <PlainButton aria-label="Close document"><Icon name="closeDoc" /></PlainButton>
            </DocTab>
          </DocTabs>
          <ToolRow $inner>
            <Tools>
              <Grip />
              <ToolList
                list={[
                  "detach", "|", "*pointer", "zoom", "hand", "textTool", "gate", "pins", "v", "block", "orthoNode", "orthoBus",
                  "orthoConduit", "diagNode", "diagBus", "diagConduit", "rect", "oval", "line", "arc", "|", "rubber", "partial",
                  "|", "flipH", "flipV", "rotate",
                ]}
              />
            </Tools>
            <Tools $last>
              <Grip />
              <ToolList list={["save", "|", "print", "|", "cut", "copy", "paste", "|", "undo", "redo"]} />
            </Tools>
          </ToolRow>
          <Viewport>
            <Canvas><Schematic /></Canvas>
            <ScrollBar vertical />
          </Viewport>
        </Doc>
      </Work>

      <Messages>
        <MessageHandle>
          <PlainButton aria-label="Close"><Icon name="dockClose" size={14} /></PlainButton>
          <PlainButton aria-label="Float"><Icon name="dockFloat" size={14} /></PlainButton>
          <PlainButton aria-label="Auto hide"><Icon name="dockPin" size={14} /></PlainButton>
          <h2>Messages</h2>
        </MessageHandle>
        <MessageMain>
          <MessagePanel>
            <FilterRow>
              <FilterButton $active>All</FilterButton>
              <FilterGroup>
                <FilterButton aria-label="Errors"><Icon name="error" /></FilterButton>
                <FilterButton aria-label="Critical warnings"><Icon name="critical" /></FilterButton>
                <FilterButton aria-label="Warnings"><Icon name="warning" /></FilterButton>
              </FilterGroup>
              <FilterButton aria-label="Flagged"><Icon name="flag" /></FilterButton>
              <SearchBox>
                <Icon name="funnel" />
                <input aria-label="Search messages" placeholder="<<Search>>" />
                <Icon name="chevron" />
              </SearchBox>
            </FilterRow>
            <MessageBox>
              <MessageTable>
                <thead>
                  <tr><th>Type</th><th>ID</th><th>Message</th></tr>
                </thead>
              </MessageTable>
              <ScrollBar idle />
            </MessageBox>
          </MessagePanel>
          <MessageTabs>
            <MessageTab $width="58px"><TabShape active width={58} /><span>System</span></MessageTab>
            <MessageTab $width="74px"><TabShape width={74} /><span>Processing</span></MessageTab>
          </MessageTabs>
        </MessageMain>
      </Messages>
      <StatusBar>
        <span>-4306, -1669</span>
        <Progress>0%</Progress>
        <span>00:00:00</span>
      </StatusBar>
    </Shell>
  );
}
